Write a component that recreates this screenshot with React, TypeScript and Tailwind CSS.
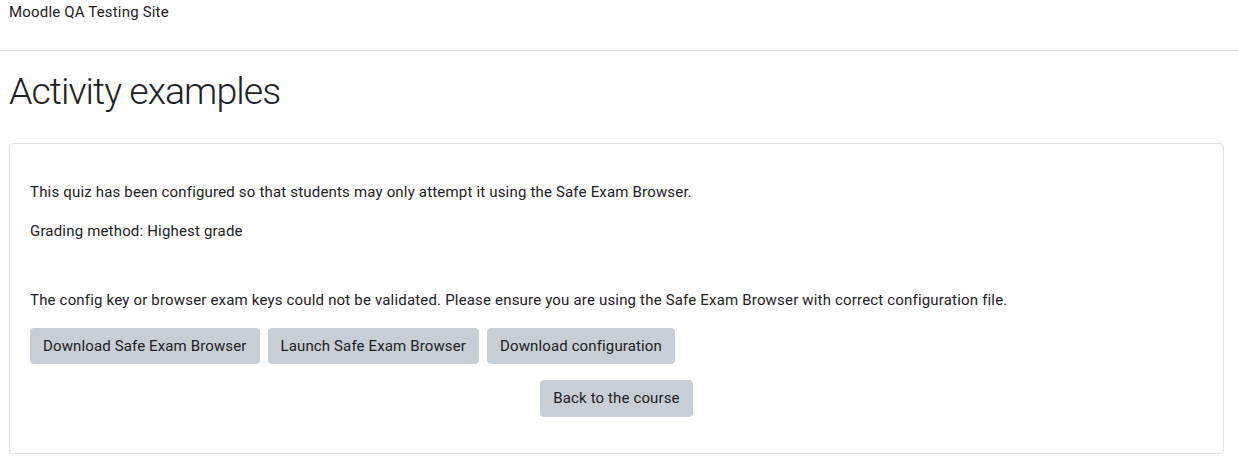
export default function App() {
  const btn =
    "rounded-[4px] border border-[#c8ced5] bg-[#c8ced5] px-3 py-[6px] text-[15px] leading-[22.5px] tracking-[0.13px] text-[#1d2125]";
  return (
    <div className="min-h-[469px] bg-white text-[#1d2125] font-['Roboto',sans-serif] text-[15px] leading-[22.5px] tracking-[0.18px]">
      <header className="h-[51px] border-b border-[#dee2e6] px-[9px] pt-px">
        <div>Moodle QA Testing Site</div>
      </header>
      <main className="px-[9px] pr-[14px]">
        <h2 className="mt-[18px] text-[37.5px] font-light leading-[45px] tracking-[-0.95px]">Activity examples</h2>
        <div className="mt-[29px] rounded-[4px] border border-[#dee2e6] px-5 pt-[37px] pb-[36px]">
          <p className="mb-4">
            This quiz has been configured so that students may only attempt it using the Safe Exam Browser.
          </p>
          <p className="mb-[47px]">Grading method: Highest grade</p>
          <p className="mb-4">
            The config key or browser exam keys could not be validated. Please ensure you are using the Safe Exam
            Browser with correct configuration file.
          </p>
          <div className="flex gap-2">
            <button className={btn}>Download Safe Exam Browser</button>
            <button className={btn}>Launch Safe Exam Browser</button>
            <button className={btn}>Download configuration</button>
          </div>
          <div className="mt-4 flex justify-center">
            <button className={btn}>Back to the course</button>
          </div>
        </div>
      </main>
    </div>
  );
}
